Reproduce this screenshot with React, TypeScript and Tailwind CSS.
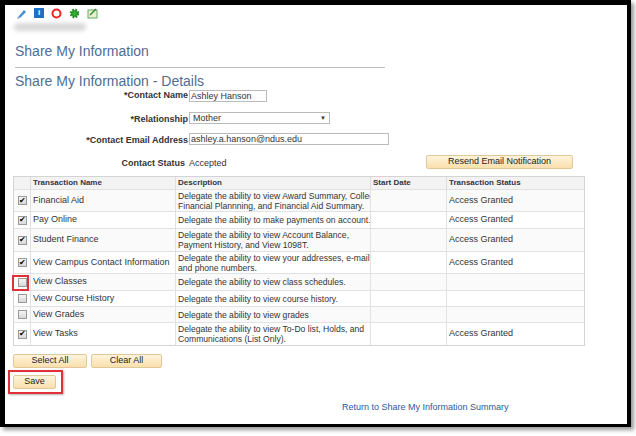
const rows = [
  { name: "Financial Aid", desc: ["Delegate the ability to view Award Summary, College", "Financial Plannning, and Financial Aid Summary."], on: true, h: "h-[22px]" },
  { name: "Pay Online", desc: ["Delegate the ability to make payments on account."], on: true, h: "h-[17px]" },
  { name: "Student Finance", desc: ["Delegate the ability to view Account Balance,", "Payment History, and View 1098T."], on: true, h: "h-[23px]" },
  { name: "View Campus Contact Information", desc: ["Delegate the ability to view your addresses, e-mail", "and phone numbers."], on: true, h: "h-[22px]" },
  { name: "View Classes", desc: ["Delegate the ability to view class schedules."], on: false, h: "h-[17px]", red: true },
  { name: "View Course History", desc: ["Delegate the ability to view course history."], on: false, h: "h-[16px]" },
  { name: "View Grades", desc: ["Delegate the ability to view grades"], on: false, h: "h-[16px]" },
  { name: "View Tasks", desc: ["Delegate the ability to view To-Do list, Holds, and", "Communications (List Only)."], on: true, h: "h-[23px]" },
];

function Check({ on }: { on: boolean }) {
  return (
    <div className="w-[9px] h-[9px] border border-[#9a9a9a] bg-gradient-to-b from-[#f4f4f4] to-[#d8d8d8] flex items-center justify-center text-[8px] leading-none text-black">
      {on ? "✔" : ""}
    </div>
  );
}

function Btn({ children, w }: { children: React.ReactNode; w: string }) {
  return (
    <div className={`${w} h-[14px] border border-[#e0c89a] bg-gradient-to-b from-[#fff4dc] to-[#f9dfac] rounded-[2px] text-[9px] text-[#222] flex items-center justify-center`}>
      {children}
    </div>
  );
}

export default function App() {
  return (
    <div className="w-[636px] h-[436px] bg-white overflow-hidden relative" style={{ fontFamily: "Arial, 'Liberation Sans', sans-serif" }}>
      <div className="absolute left-0 top-0 w-[631px] h-[427px] border-l-[5px] border-t-[5px] border-r-[4px] border-b-[3px] border-black shadow-[3px_3px_4px_rgba(0,0,0,0.4)]" />
      <div className="pl-[16px] pt-[7px] flex gap-[7px] items-center h-[19px]">
        <svg width="11" height="11" viewBox="0 0 11 11"><path d="M2 9 L8 2 L10 4 L4 10 Z" fill="#4a90d9" /><path d="M1 10 L3 10" stroke="#88b" /></svg>
        <div className="w-[10px] h-[10px] bg-[#1f6fc5] text-white text-[8px] font-bold flex items-center justify-center leading-none">i</div>
        <svg width="11" height="11" viewBox="0 0 11 11"><circle cx="5.5" cy="5.5" r="4" fill="none" stroke="#e22" strokeWidth="2" /></svg>
        <svg width="11" height="11" viewBox="0 0 11 11"><circle cx="5.5" cy="5.5" r="3.5" fill="#3a3" stroke="#282" strokeWidth="2.5" strokeDasharray="1.5 1.3" /></svg>
        <svg width="11" height="11" viewBox="0 0 11 11"><rect x="1" y="2" width="9" height="8" fill="#e8f0d0" stroke="#6a6" /><path d="M3 7 L5 5 L9 1" stroke="#383" strokeWidth="1.5" fill="none" /></svg>
      </div>
      <div className="ml-[14px] mt-[4px] w-[72px] h-[8px] bg-[#d8d8d8] rounded blur-[2px]" />
      <div className="ml-[15px] mt-[10px] text-[14px] text-[#4e6d94]">Share My Information</div>
      <div className="ml-[15px] mt-[5px] w-[370px] h-[1px] bg-[#c0c0c0]" />
      <div className="ml-[15px] mt-[5px] text-[14px] text-[#4e6d94] leading-[16px]">Share My Information - Details</div>
      <div className="text-[9px] text-[#333] ">
        <div className="flex items-center h-[14px]">
          <div className="w-[189px] text-right font-bold pr-[1px]">*Contact Name</div>
          <div className="w-[78px] h-[12px] border border-[#bbb] px-[1px] leading-[10px]">Ashley Hanson</div>
        </div>
        <div className="flex items-center h-[14px] mt-[8px]">
          <div className="w-[189px] text-right font-bold pr-[1px] pt-[4px]">*Relationship</div>
          <div className="w-[141px] h-[12px] border border-[#bbb] px-[3px] leading-[10px] flex justify-between">Mother<span className="text-[6px]">▼</span></div>
        </div>
        <div className="flex items-center h-[14px] mt-[7px]">
          <div className="w-[189px] text-right font-bold pr-[1px] pt-[4px]">*Contact Email Address</div>
          <div className="w-[200px] h-[12px] border border-[#bbb] px-[1px] leading-[10px]">ashley.a.hanson@ndus.edu</div>
        </div>
        <div className="flex items-center h-[14px] mt-[9px]">
          <div className="w-[189px] text-right font-bold pr-[4px] pt-[4px]">Contact Status</div>
          <div className="pt-[4px]">Accepted</div>
          <div className="ml-auto mr-[63px]"><Btn w="w-[147px]">Resend Email Notification</Btn></div>
        </div>
      </div>
      <div className="ml-[13px] mt-[7px] w-[572px] border border-[#d4d4d4] text-[9px] text-[#333]">
        <div className="flex h-[12px] bg-[#f3f3f3] font-bold text-[8px] text-[#334] items-center">
          <div className="w-[17px] h-full border-r border-[#ddd]" />
          <div className="w-[145px] pl-[2px] h-full border-r border-[#ddd]">Transaction Name</div>
          <div className="w-[195px] pl-[2px] h-full border-r border-[#ddd]">Description</div>
          <div className="w-[76px] pl-[2px] h-full border-r border-[#ddd]">Start Date</div>
          <div className="pl-[2px]">Transaction Status</div>
        </div>
        {rows.map((r, i) => (
          <div key={r.name} className={`flex ${r.h} border-t border-[#e2e2e2] ${i % 2 ? "bg-white" : "bg-[#fafafa]"}`}>
            <div className="w-[17px] border-r border-[#e2e2e2] flex items-center justify-center relative">
              <Check on={r.on} />
              {r.red && <div className="absolute left-[-2px] top-[1px] w-[17px] h-[16px] border-2 border-[#e0313a]" />}
            </div>
            <div className="w-[145px] pl-[2px] border-r border-[#e2e2e2] flex items-center whitespace-nowrap">{r.name}</div>
            <div className="w-[195px] pl-[2px] border-r border-[#e2e2e2] flex flex-col justify-center leading-[10px] text-[8.6px] whitespace-nowrap overflow-hidden">
              {r.desc.map((d) => <div key={d}>{d}</div>)}
            </div>
            <div className="w-[76px] border-r border-[#e2e2e2]" />
            <div className="pl-[2px] flex items-center">{r.on ? "Access Granted" : ""}</div>
          </div>
        ))}
      </div>
      <div className="ml-[13px] mt-[8px] flex gap-[4px]">
        <Btn w="w-[74px]">Select All</Btn>
        <Btn w="w-[71px]">Clear All</Btn>
      </div>
      <div className="ml-[8px] mt-[2px] w-[55px] h-[24px] border-2 border-[#e0313a] shadow-[1px_1px_2px_rgba(0,0,0,0.3)] p-[3px]">
        <Btn w="w-[43px]">Save</Btn>
      </div>
      <div className="ml-[342px] mt-[7px] text-[9px] text-[#2a5a9c]">Return to Share My Information Summary</div>
    </div>
  );
}
